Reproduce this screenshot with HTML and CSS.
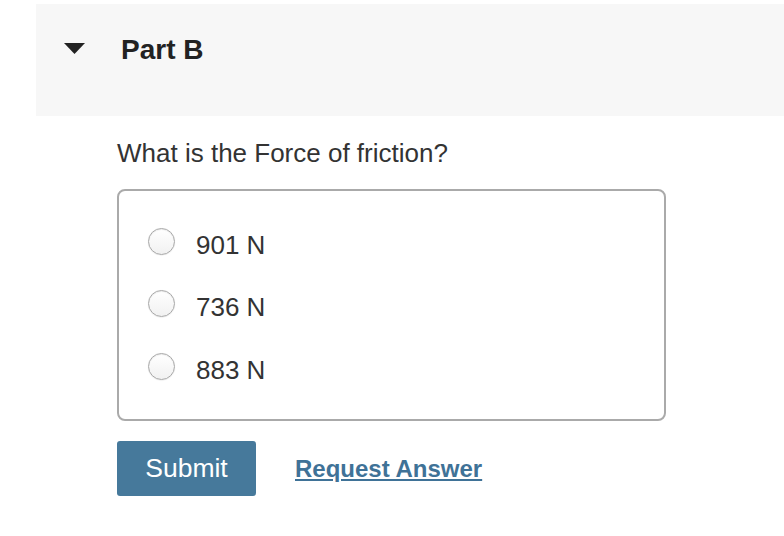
FILE: index.html
```html
<!DOCTYPE html>
<html>
<head>
<meta charset="utf-8">
<link rel="stylesheet" href="styles.css">
</head>
<body>
<div class="page">
  <div class="part-header">
    <svg class="caret" width="21" height="11" viewBox="0 0 21 11"><path d="M0 0 H21 L10.5 11 Z" fill="#222"/></svg>
    <h2 class="part-title">Part B</h2>
  </div>
  <div class="part-body">
    <p class="question">What is the Force of friction?</p>
    <div class="choices">
      <label class="choice"><span class="radio"></span><span class="choice-text">901 N</span></label>
      <label class="choice"><span class="radio"></span><span class="choice-text">736 N</span></label>
      <label class="choice"><span class="radio"></span><span class="choice-text">883 N</span></label>
    </div>
    <div class="actions">
      <button class="submit">Submit</button>
      <a class="request" href="#">Request Answer</a>
    </div>
  </div>
</div>
</body>
</html>
```

FILE: styles.css
```css
html, body {
  margin: 0;
  padding: 0;
  background: #fff;
}
body {
  font-family: "Liberation Sans", Arial, Helvetica, sans-serif;
  color: #333;
}
.page {
  padding: 4px 0 0 36px;
}
.part-header {
  height: 112px;
  background: #f7f7f7;
  display: flex;
  align-items: flex-start;
  padding: 30px 0 0 28px;
  box-sizing: border-box;
}
.caret {
  display: block;
  margin-top: 9px;
  flex: none;
}
.part-title {
  margin: 0 0 0 36px;
  font-size: 28px;
  line-height: 32px;
  font-weight: bold;
  color: #222;
}
.part-body {
  padding: 0 0 0 81px;
}
.question {
  margin: 22px 0 0 0;
  font-size: 26px;
  line-height: 30px;
}
.choices {
  margin-top: 21px;
  width: 549px;
  height: 232px;
  box-sizing: border-box;
  border: 2px solid #aaa;
  border-radius: 8px;
  padding: 38.5px 0 0 29px;
  display: flex;
  flex-direction: column;
  gap: 32.5px;
}
.choice {
  display: flex;
  align-items: flex-start;
  height: 30px;
  font-size: 26px;
  line-height: 30px;
}
.radio {
  width: 27px;
  height: 27px;
  box-sizing: border-box;
  border-radius: 50%;
  border: 1px solid #a8a8a8;
  background: linear-gradient(#ffffff, #f1f1f1);
  box-shadow: inset 0 1px 1px rgba(0,0,0,0.08), 0 0.5px 1px rgba(0,0,0,0.1);
  margin-top: -2px;
  flex: none;
}
.choice-text {
  margin-left: 21px;
}
.actions {
  margin-top: 20px;
  display: flex;
  align-items: baseline;
}
.submit {
  width: 139px;
  height: 55px;
  border: none;
  border-radius: 3px;
  background: #46799b;
  color: #fff;
  font-family: "Liberation Sans", Arial, Helvetica, sans-serif;
  font-size: 26.5px;
  padding: 0;
}
.request {
  margin-left: 39px;
  font-size: 24px;
  font-weight: bold;
  color: #3f7297;
  text-decoration: underline;
  text-decoration-thickness: 2px;
  text-underline-offset: 2px;
}
```
